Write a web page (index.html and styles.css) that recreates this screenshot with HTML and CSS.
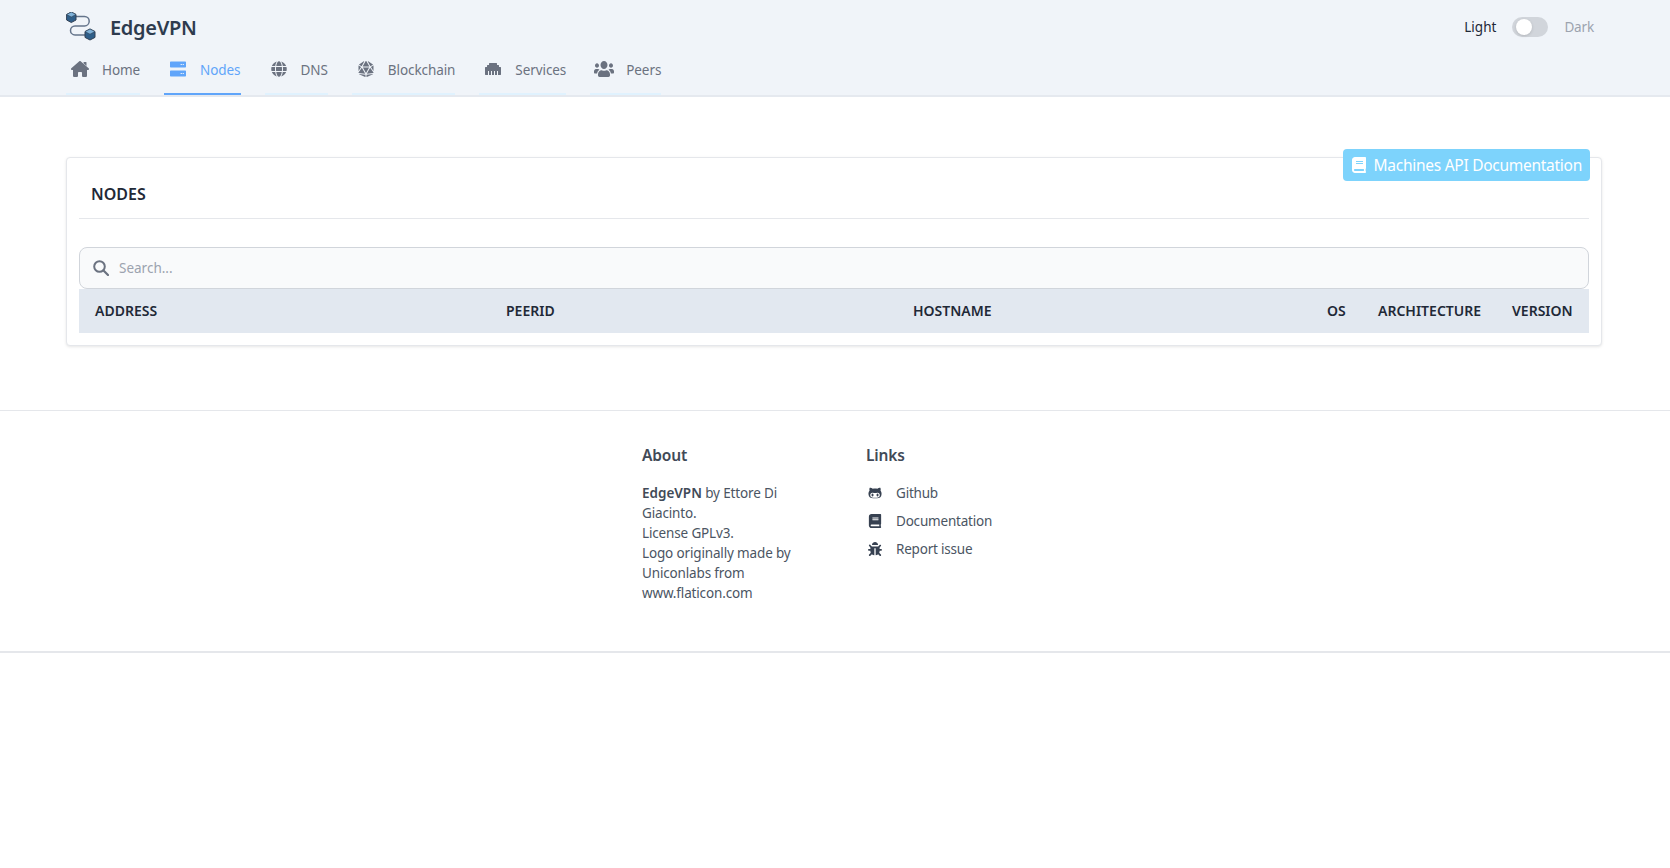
FILE: index.html
```html
<!DOCTYPE html>
<html lang="en">
<head>
<meta charset="utf-8">
<title>EdgeVPN</title>
<link rel="stylesheet" href="styles.css">
</head>
<body>
<svg class="sprite" width="0" height="0" aria-hidden="true">
  <symbol id="i-home" viewBox="0 0 576 512"><path d="M416 32h64a16 16 0 0 1 16 16v110l-96-85V48a16 16 0 0 1 16-16z"/><path d="M575.800 255.500c0 18-15 32.100-32 32.100h-32l.7 160.200c0 2.700-.2 5.400-.5 8.100V472c0 22.100-17.900 40-40 40H456c-1.100 0-2.200 0-3.300-.1c-1.400 .1-2.800 .1-4.200 .1H416 392c-22.100 0-40-17.900-40-40V448 384c0-17.700-14.300-32-32-32H256c-17.700 0-32 14.300-32 32v64 24c0 22.100-17.900 40-40 40H160 128.100c-1.500 0-3-.1-4.500-.2c-1.200 .1-2.400 .2-3.600 .2H104c-22.100 0-40-17.900-40-40V360c0-.9 0-1.900 .1-2.800V287.600H32c-18 0-32-14-32-32.100c0-9 3-17 10-24L266.400 8c7-7 15-8 22-8s15 2 21 7L564.800 231.500c8 7 12 15 11 24z"/></symbol>
  <symbol id="i-server" viewBox="0 0 512 512"><path fill-rule="evenodd" d="M24 16h464a24 24 0 0 1 24 24v144a24 24 0 0 1-24 24H24a24 24 0 0 1-24-24V40a24 24 0 0 1 24-24zM24 304h464a24 24 0 0 1 24 24v144a24 24 0 0 1-24 24H24a24 24 0 0 1-24-24V328a24 24 0 0 1 24-24zM340 96h40v32h-40zM404 96h40v32h-40zM340 384h40v32h-40zM404 384h40v32h-40z"/></symbol>
  <symbol id="i-globe" viewBox="0 0 496 512"><path d="M336.500 160C322 70.700 287.800 8 248 8s-74 62.700-88.500 152h177zM152 256c0 22.200 1.200 43.500 3.300 64h185.300c2.100-20.500 3.300-41.800 3.300-64s-1.200-43.500-3.300-64H155.300c-2.100 20.500-3.300 41.800-3.300 64zm324.700-96c-28.600-67.900-86.500-120.400-158-141.600 24.400 33.800 41.200 84.700 50 141.600h108zM177.200 18.400C105.800 39.600 47.800 92.100 19.300 160h108c8.700-56.900 25.500-107.800 49.900-141.600zM487.400 192H372.700c2.100 21 3.300 42.500 3.300 64s-1.200 43-3.300 64h114.600c5.500-20.500 8.600-41.800 8.600-64s-3.100-43.500-8.500-64zM120 256c0-21.500 1.200-43 3.300-64H8.600C3.200 212.500 0 233.800 0 256s3.200 43.500 8.600 64h114.600c-2-21-3.200-42.500-3.200-64zm39.500 96c14.500 89.300 48.700 152 88.500 152s74-62.700 88.500-152h-177zm159.300 141.600c71.400-21.200 129.400-73.700 158-141.600h-108c-8.800 56.900-25.600 107.800-50 141.600zM19.300 352c28.600 67.900 86.500 120.400 158 141.600-24.400-33.800-41.200-84.700-50-141.600h-108z"/></symbol>
  <symbol id="i-d20" viewBox="0 0 480 512"><path d="M106.750 215.060L1.200 370.950c-3.080 5 .1 11.500 5.930 12.140l208.260 22.070-108.640-190.100zM7.410 315.430L82.700 193.080 6.060 147.100c-2.670-1.600-6.060.32-6.060 3.430v162.810c0 4.030 5.290 5.530 7.410 2.090zM18.250 423.600l194.400 87.660c5.300 2.450 11.350-1.430 11.350-7.260v-65.670l-203.550-22.300c-4.450-.5-6.230 5.590-2.200 7.570zm81.220-257.780L179.400 22.880c4.340-7.060-3.590-15.250-10.780-11.140L17.810 110.350c-2.470 1.620-2.390 5.260.13 6.780l81.530 48.690zM240 176h109.210L253.630 7.620C250.500 2.540 245.250 0 240 0s-10.500 2.540-13.630 7.620L130.790 176H240zm233.940-28.900l-76.640 45.990 75.290 122.350c2.110 3.440 7.410 1.940 7.410-2.100V150.530c0-3.110-3.390-5.030-6.060-3.430zm-93.410 18.720l81.530-48.700c2.530-1.520 2.600-5.160.13-6.780l-150.810-98.600c-7.190-4.110-15.120 4.080-10.780 11.140l79.930 142.940zm79.020 250.210L256 438.320v65.670c0 5.840 6.050 9.710 11.350 7.260l194.400-87.660c4.030-1.970 2.250-8.060-2.200-7.560zm-86.300-200.970l-108.630 190.100 208.260-22.070c5.830-.65 9.010-7.140 5.930-12.140L373.250 215.060zM240 208H139.570L240 383.750 340.430 208H240z"/></symbol>
  <symbol id="i-ethernet" viewBox="0 0 512 512"><path d="M496 192h-48v-48c0-8.800-7.200-16-16-16h-48V80c0-8.800-7.200-16-16-16H144c-8.800 0-16 7.200-16 16v48H80c-8.800 0-16 7.200-16 16v48H16c-8.800 0-16 7.200-16 16v224c0 8.800 7.200 16 16 16h80V320h32v128h64V320h32v128h64V320h32v128h64V320h32v128h80c8.800 0 16-7.200 16-16V208c0-8.800-7.200-16-16-16z"/></symbol>
  <symbol id="i-users" viewBox="0 32 640 448" preserveAspectRatio="none"><path d="M96 224c35.300 0 64-28.700 64-64s-28.700-64-64-64-64 28.700-64 64 28.700 64 64 64zm448 0c35.300 0 64-28.700 64-64s-28.700-64-64-64-64 28.700-64 64 28.700 64 64 64zm32 32h-64c-17.600 0-33.500 7.100-45.100 18.600 40.300 22.100 68.900 62 75.100 109.400h66c17.700 0 32-14.300 32-32v-32c0-35.300-28.700-64-64-64zm-256 0c61.900 0 112-50.100 112-112S381.900 32 320 32 208 82.100 208 144s50.100 112 112 112zm76.800 32h-8.300c-20.800 10-43.900 16-68.500 16s-47.600-6-68.500-16h-8.300C179.600 288 128 339.600 128 403.200V432c0 26.500 21.500 48 48 48h288c26.500 0 48-21.500 48-48v-28.800c0-63.600-51.600-115.200-115.200-115.200zm-223.700-13.400C161.500 263.100 145.600 256 128 256H64c-35.300 0-64 28.700-64 64v32c0 17.700 14.300 32 32 32h65.900c6.300-47.400 34.900-87.300 75.200-109.400z"/></symbol>
  <symbol id="i-book" viewBox="0 0 448 512"><path d="M448 360V24c0-13.300-10.700-24-24-24H96C43 0 0 43 0 96v320c0 53 43 96 96 96h328c13.300 0 24-10.700 24-24v-16c0-7.500-3.500-14.300-8.900-18.700-4.200-15.400-4.200-59.300 0-74.700 5.400-4.300 8.900-11.100 8.900-18.600zM128 134c0-3.300 2.700-6 6-6h212c3.300 0 6 2.700 6 6v20c0 3.300-2.700 6-6 6H134c-3.300 0-6-2.700-6-6v-20zm0 64c0-3.300 2.700-6 6-6h212c3.300 0 6 2.700 6 6v20c0 3.300-2.700 6-6 6H134c-3.300 0-6-2.700-6-6v-20zm253.400 250H96c-17.700 0-32-14.300-32-32 0-17.600 14.400-32 32-32h285.400c-1.900 17.100-1.900 46.900 0 64z"/></symbol>
  <symbol id="i-bug" viewBox="0 0 512 512"><path d="M511.988 288.900c-.478 17.430-15.217 31.100-32.653 31.100H424v16c0 21.864-4.882 42.584-13.600 61.145l60.228 60.228c12.496 12.497 12.496 32.758 0 45.255-12.498 12.497-32.759 12.496-45.256 0l-54.736-54.736C345.886 467.965 314.351 480 280 480V236c0-6.627-5.373-12-12-12h-24c-6.627 0-12 5.373-12 12v244c-34.351 0-65.886-12.035-90.636-32.108l-54.736 54.736c-12.498 12.497-32.759 12.496-45.256 0-12.496-12.497-12.496-32.758 0-45.255l60.228-60.228C92.882 378.584 88 357.864 88 336v-16H32.666C15.230 320 .491 306.330.013 288.900-.484 270.816 14.028 256 32 256h56v-58.745l-46.628-46.628c-12.496-12.497-12.496-32.758 0-45.255 12.498-12.497 32.758-12.497 45.256 0L141.255 160h229.489l54.627-54.627c12.498-12.497 32.758-12.497 45.256 0 12.496 12.497 12.496 32.758 0 45.255L424 197.255V256h56c17.972 0 32.484 14.816 31.988 32.900zM257 0c-61.856 0-112 50.144-112 112h224C369 50.144 318.856 0 257 0z"/></symbol>
  <symbol id="i-search" viewBox="0 0 16 16"><circle cx="6.500" cy="6.500" r="5.300" fill="none" stroke="currentColor" stroke-width="2"/><path d="M10.500 10.500L15 15" fill="none" stroke="currentColor" stroke-width="2.200" stroke-linecap="round"/></symbol>
  <symbol id="i-github" viewBox="0 0 480 512"><path d="M186.100 328.700c0 20.900-10.900 55.100-36.700 55.100s-36.700-34.200-36.700-55.100 10.900-55.100 36.700-55.100 36.700 34.200 36.700 55.100zM480 278.200c0 31.900-3.200 65.700-17.500 95-37.900 76.600-142.100 74.800-216.700 74.800-75.800 0-186.200 2.700-225.600-74.800-14.600-29-20.200-63.100-20.200-95 0-41.900 13.900-81.500 41.500-113.600-5.200-15.800-7.700-32.400-7.700-48.800 0-21.500 4.900-32.300 14.600-51.800 45.300 0 74.300 9 108.800 36 29-6.900 58.800-10 88.700-10 27 0 54.200 2.900 80.400 9.200 34-26.700 63-35.200 107.800-35.200 9.800 19.500 14.600 30.300 14.600 51.800 0 16.400-2.600 32.700-7.700 48.200 27.500 32.400 39 72.300 39 114.200zm-64.300 50.500c0-43.900-26.700-82.600-73.500-82.600-18.900 0-37 3.400-56 6-14.900 2.300-29.800 3.200-45.100 3.200-15.200 0-30.100-.9-45.100-3.200-18.700-2.600-37-6-56-6-46.800 0-73.500 38.700-73.500 82.600 0 87.800 80.400 101.300 150.400 101.300h48.200c70.300 0 150.600-13.400 150.600-101.300zm-82.600-55.100c-25.800 0-36.700 34.200-36.700 55.100s10.900 55.100 36.700 55.100 36.700-34.200 36.700-55.100-10.900-55.100-36.700-55.100z"/></symbol>
</svg>

<header class="topbar">
  <div class="container">
    <div class="brand-row">
      <a class="brand">
        <svg class="logo" viewBox="0 0 30 30">
          <path class="logo-wire" d="M6 4.500h12.500a4.700 4.700 0 0 1 0 9.400H9a4.500 4.500 0 0 0 0 9H22"/>
          <path class="logo-cube" d="M5.300 0l4.700 2.500v5.500l-4.700 2.500-4.700-2.500V2.500z"/>
          <path class="logo-top" d="M5.300 0l4.700 2.500-4.700 2.500-4.700-2.500z"/>
          <path class="logo-cube" d="M24 17l5 2.600v5.800L24 28l-5-2.600v-5.800z"/>
          <path class="logo-top" d="M24 17l5 2.600-5 2.600-5-2.600z"/>
        </svg>
        <span class="brand-name">EdgeVPN</span>
      </a>
      <div class="theme">
        <span class="theme-light">Light</span>
        <span class="switch"><span class="knob"></span></span>
        <span class="theme-dark">Dark</span>
      </div>
    </div>
    <nav class="tabs">
      <a class="tab"><svg class="tab-icon"><use href="#i-home"/></svg>Home</a>
      <a class="tab active"><svg class="tab-icon"><use href="#i-server"/></svg>Nodes</a>
      <a class="tab"><svg class="tab-icon"><use href="#i-globe"/></svg>DNS</a>
      <a class="tab"><svg class="tab-icon"><use href="#i-d20"/></svg>Blockchain</a>
      <a class="tab"><svg class="tab-icon"><use href="#i-ethernet"/></svg>Services</a>
      <a class="tab"><svg class="tab-icon"><use href="#i-users"/></svg>Peers</a>
    </nav>
  </div>
</header>

<main class="container main">
  <section class="card">
    <a class="api-btn"><svg class="api-icon"><use href="#i-book"/></svg>Machines API Documentation</a>
    <h2 class="card-title">NODES</h2>
    <div class="search">
      <svg class="search-icon"><use href="#i-search"/></svg>
      <input class="search-input" type="text" placeholder="Search...">
    </div>
    <table class="grid">
      <thead>
        <tr>
          <th class="col-address">ADDRESS</th>
          <th class="col-peer">PEERID</th>
          <th class="col-host">HOSTNAME</th>
          <th class="col-os">OS</th>
          <th class="col-arch">ARCHITECTURE</th>
          <th class="col-ver">VERSION</th>
        </tr>
      </thead>
    </table>
  </section>
</main>

<footer class="footer">
  <div class="footer-inner">
    <div class="about">
      <h3 class="footer-title">About</h3>
      <p class="about-text"><strong class="about-strong">EdgeVPN</strong> by Ettore Di Giacinto.<br>License GPLv3.<br>Logo originally made by Uniconlabs from www.flaticon.com</p>
    </div>
    <div class="links">
      <h3 class="footer-title">Links</h3>
      <ul class="link-list">
        <li class="link-item"><svg class="link-icon"><use href="#i-github"/></svg>Github</li>
        <li class="link-item"><svg class="link-icon"><use href="#i-book"/></svg>Documentation</li>
        <li class="link-item"><svg class="link-icon"><use href="#i-bug"/></svg>Report issue</li>
      </ul>
    </div>
  </div>
</footer>
</body>
</html>
```

FILE: styles.css
```css
* { box-sizing: border-box; }
html, body { margin: 0; padding: 0; }
body {
  background: #fff;
  color: #374151;
  font-family: "Noto Sans", "Open Sans", sans-serif;
  font-size: 14px;
}
.sprite { position: absolute; }
.container { width: 1536px; margin: 0 0 0 66px; }

.topbar {
  height: 97px;
  background: #f0f4f9;
  border-bottom: 2px solid #e5e9ef;
}
.brand-row {
  height: 50px;
  padding-top: 2px;
  padding-right: 8px;
  display: flex;
  align-items: center;
  justify-content: space-between;
}
.brand { display: flex; align-items: center; gap: 14px; }
.logo { width: 30px; height: 30px; margin-top: 2px; }
.logo-wire { fill: none; stroke: #64748b; stroke-width: 1.500; }
.logo-cube { fill: #2f5f8a; stroke: #334155; stroke-width: 1; }
.logo-top { fill: #7fb2d9; stroke: #334155; stroke-width: .6; }
.brand-name { margin-top: 2px; font-size: 20px; font-weight: 600; color: #2d3b4e; letter-spacing: -.3px; }

.theme { display: flex; align-items: center; gap: 16px; margin-top: 2px; font-size: 13.5px; }
.theme-light { color: #1f2937; }
.theme-dark { color: #9ca3af; letter-spacing: -.15px; }
.switch {
  display: block;
  width: 36px;
  height: 20px;
  border-radius: 10px;
  background: #d1d5db;
  position: relative;
}
.knob {
  position: absolute;
  left: 4px;
  top: 2px;
  width: 16px;
  height: 16px;
  border-radius: 50%;
  background: #fff;
  box-shadow: 0 1px 3px rgba(0,0,0,.15);
}

.tabs { display: flex; gap: 24px; height: 45px; }
.tab {
  display: flex;
  align-items: center;
  padding-bottom: 3px;
  color: #6b7280;
  border-bottom: 2px solid #e0f2fe;
  fill: currentColor;
  font-size: 13.5px;
  letter-spacing: -.08px;
}
.tab.active { color: #60a5fa; border-bottom-color: #60a5fa; }
.tab-icon { width: 20px; height: 16px; margin: -2px 12px 0 4px; }

.main { padding-top: 60px; }
.card {
  position: relative;
  height: 189px;
  padding: 0 12px;
  background: #fff;
  border: 1px solid #e5e7eb;
  border-radius: 4px;
  box-shadow: 0 1px 3px rgba(0,0,0,.1);
}
.api-btn {
  position: absolute;
  right: 11px;
  top: -9px;
  height: 32px;
  display: flex;
  align-items: center;
  padding: 0 8px 0 9px;
  background: #7dd3fc;
  border-radius: 4px;
  color: #fff;
  font-size: 15.5px;
  fill: #fff;
  letter-spacing: -.27px;
}
.api-icon { width: 14px; height: 16px; margin-right: 8px; }
.card-title {
  margin: 0;
  height: 61px;
  padding: 26px 12px 0;
  border-bottom: 1px solid #e5e7eb;
  font-size: 16px;
  font-weight: 600;
  color: #1f2937;
  line-height: 20px;
}
.search {
  margin-top: 28px;
  height: 42px;
  display: flex;
  align-items: center;
  padding: 0 13px;
  background: #f9fafb;
  border: 1px solid #d1d5db;
  border-radius: 8px;
  color: #6b7280;
}
.search-icon { width: 16px; height: 16px; margin-right: 10px; }
.search-input {
  flex: 1;
  border: 0;
  outline: 0;
  padding: 0;
  background: transparent;
  font: inherit;
  font-size: 13.5px;
  color: #374151;
}
.search-input::placeholder { color: #9ca3af; }
.grid { width: 100%; border-collapse: collapse; table-layout: fixed; }
.grid th {
  height: 44px;
  padding: 0 16px 2px;
  background: #e2e8f0;
  text-align: left;
  font-size: 14px;
  font-weight: 600;
  color: #1f2937;
}
.col-address { width: 411px; }
.col-peer { width: 407px; }
.col-host { width: 414px; }
.col-os { width: 51px; }
.col-arch { width: 134px; }
.col-ver { width: auto; }

.footer {
  margin-top: 64px;
  height: 243px;
  border-top: 1px solid #e5e7eb;
  border-bottom: 2px solid #e5e7eb;
}
.footer-inner { display: flex; padding: 32px 0 0 642px; }
.about { width: 224px; padding-right: 64px; }
.footer-title { margin: 0 0 16px; font-size: 15.5px; font-weight: 600; line-height: 24px; color: #414a57; letter-spacing: -.15px; }
.about-text { margin: 0; font-size: 13.5px; line-height: 20px; color: #4b5563; letter-spacing: -.15px; }
.about-strong { color: #414a57; font-weight: 600; letter-spacing: 0; }
.link-list { list-style: none; margin: 0; padding: 1px 0 0; }
.link-item { display: flex; align-items: center; height: 28px; margin-top: -5px; margin-bottom: 5px; font-size: 13.5px; color: #4b5563; fill: #374151; letter-spacing: -.2px; }
.link-icon { width: 16px; height: 14px; margin: 0 13px 0 1px; }
```
